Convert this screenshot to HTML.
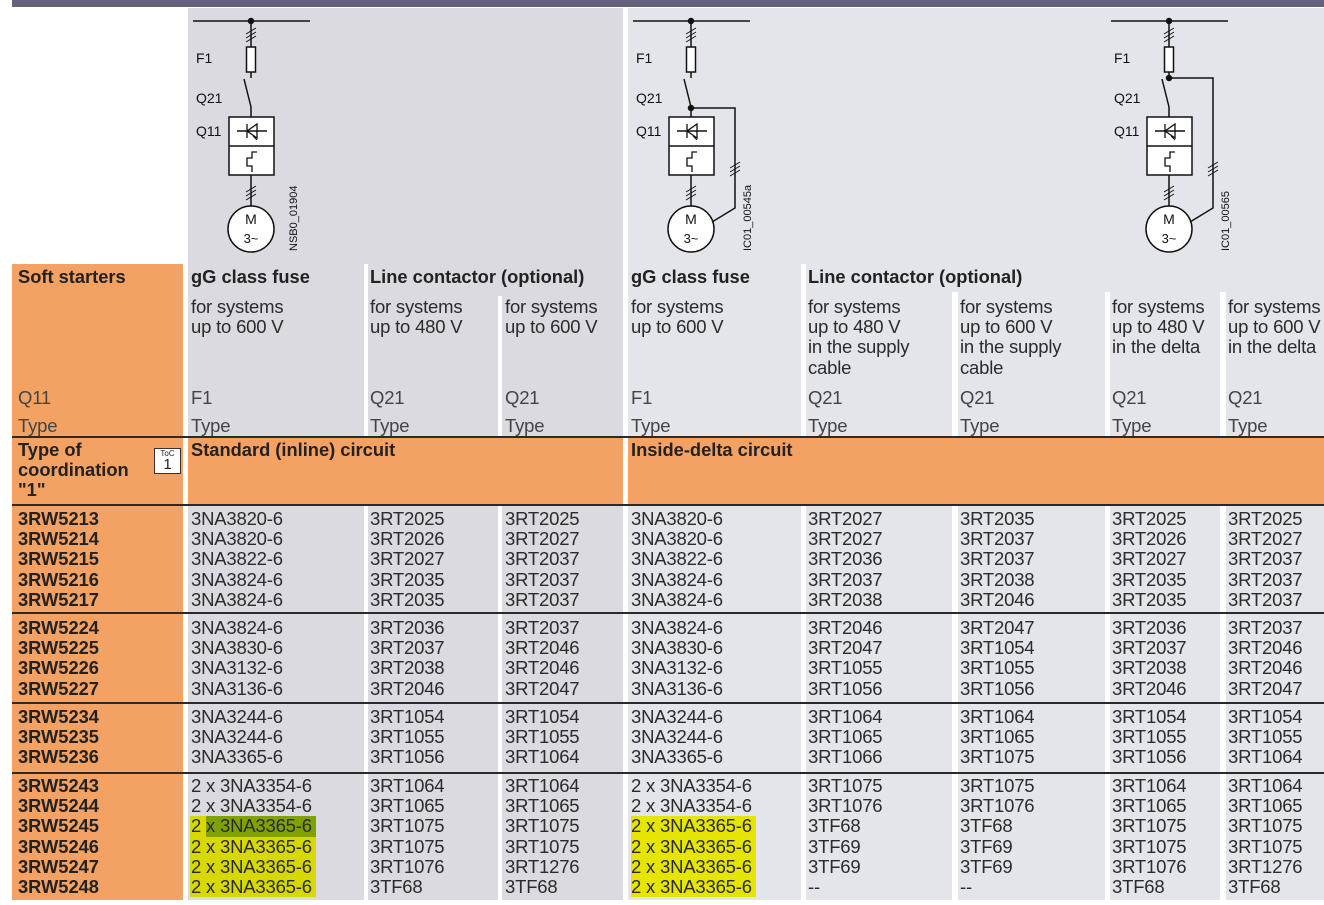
<!DOCTYPE html>
<html><head><meta charset="utf-8">
<style>
*{margin:0;padding:0;box-sizing:border-box}
body{width:1324px;height:905px;position:relative;background:#fff;font-family:"Liberation Sans",Arial,sans-serif;color:#2b2b2b;overflow:hidden}
.a{position:absolute}
.t{position:absolute;font-size:18.5px;line-height:20.2px;white-space:nowrap;letter-spacing:-0.2px}
.b{font-weight:bold;font-size:18.3px;letter-spacing:0px;color:#222}
.o{background:#f4a263}
.g1{background:#dadae0}
.g2{background:#e4e5ea}
.w{background:#fff}
.k{background:#2a2a2a;height:1.5px}
.hl{background:#d6d800}
.hl2{background:#e6e500}
.dg{background:#80a200}
</style></head><body>
<div class="a" style="left:12px;top:0;width:1312px;height:7px;background:#64637b"></div>
<div class="a g1" style="left:188px;top:8px;width:435px;height:429px"></div>
<div class="a g2" style="left:628px;top:8px;width:696px;height:429px"></div>
<div class="a o" style="left:12px;top:264px;width:171px;height:173px"></div>
<div class="a w" style="left:364px;top:264px;width:4px;height:173px"></div>
<div class="a w" style="left:498px;top:296px;width:4px;height:141px"></div>
<div class="a w" style="left:801px;top:264px;width:5px;height:173px"></div>
<div class="a w" style="left:952px;top:292px;width:6px;height:145px"></div>
<div class="a w" style="left:1105px;top:292px;width:5px;height:145px"></div>
<div class="a w" style="left:1220px;top:292px;width:6px;height:145px"></div>
<div class="a o" style="left:12px;top:437px;width:171px;height:68px"></div>
<div class="a o" style="left:188px;top:437px;width:435px;height:68px"></div>
<div class="a o" style="left:628px;top:437px;width:696px;height:68px"></div>
<div class="a o" style="left:12px;top:505px;width:171px;height:395px"></div>
<div class="a g1" style="left:188px;top:505px;width:176px;height:395px"></div>
<div class="a g1" style="left:368px;top:505px;width:130px;height:395px"></div>
<div class="a g1" style="left:502px;top:505px;width:121px;height:395px"></div>
<div class="a g2" style="left:628px;top:505px;width:173px;height:395px"></div>
<div class="a g2" style="left:806px;top:505px;width:146px;height:395px"></div>
<div class="a g2" style="left:958px;top:505px;width:147px;height:395px"></div>
<div class="a g2" style="left:1110px;top:505px;width:110px;height:395px"></div>
<div class="a g2" style="left:1226px;top:505px;width:98px;height:395px"></div>
<div class="a k" style="left:12px;top:436px;width:1312px"></div>
<div class="a k" style="left:12px;top:504px;width:1312px"></div>
<div class="a k" style="left:12px;top:612px;width:1312px"></div>
<div class="a k" style="left:12px;top:702px;width:1312px"></div>
<div class="a k" style="left:12px;top:772px;width:1312px"></div>
<div class="a hl" style="left:190px;top:816px;width:126px;height:81px"></div>
<div class="a dg" style="left:206px;top:816px;width:110px;height:21px"></div>
<div class="a hl2" style="left:631px;top:816px;width:125px;height:81px"></div>

<svg class="a" style="left:0;top:0" width="1324" height="264" viewBox="0 0 1324 264" fill="none" stroke="#111" stroke-width="1.5" font-family="Liberation Sans,Arial,sans-serif">
<defs>
<g id="d">
<line x1="-58" y1="21" x2="59" y2="21"/>
<circle cx="0" cy="21" r="2.5" fill="#111"/>
<line x1="0" y1="21" x2="0" y2="47"/>
<path d="M-5 34 L5 28 M-5 38 L5 32 M-5 42 L5 36" stroke-width="1"/>
<rect x="-4.5" y="47" width="9" height="25" fill="#fff"/>
<line x1="0" y1="72" x2="0" y2="78"/>
<line x1="-7" y1="79" x2="0" y2="107"/>
<line x1="0" y1="107" x2="0" y2="117"/>
<rect x="-22" y="117" width="45" height="58" fill="#fff"/>
<line x1="-22" y1="146" x2="23" y2="146"/>
<line x1="-14" y1="131" x2="16" y2="131"/>
<path d="M-4 124 L-4 138 M6 124 L6 138 L-4 131 Z M6 124 L-4 131" stroke-width="1.3"/>
<path d="M2 136 L6 140" stroke-width="1"/>
<path d="M6 152 L1 152 L1 158 L-4 158 L-4 166 L1 166 L1 172" stroke-width="1.3"/>
<line x1="0" y1="175" x2="0" y2="206"/>
<path d="M-5 192 L5 186 M-5 196 L5 190 M-5 200 L5 194" stroke-width="1"/>
<circle cx="0" cy="229" r="23" fill="#fff"/>
</g>
</defs>
<use href="#d" x="251"/>
<use href="#d" x="691"/>
<use href="#d" x="1169"/>
<circle cx="691" cy="108" r="2.5" fill="#111"/>
<path d="M691 108 L735 108 L735 208 L712 222"/>
<path d="M730 168 L740 162 M730 172 L740 166 M730 176 L740 170" stroke-width="1"/>
<circle cx="1169" cy="78" r="2.5" fill="#111"/>
<path d="M1169 78 L1213 78 L1213 208 L1190 222"/>
<path d="M1208 168 L1218 162 M1208 172 L1218 166 M1208 176 L1218 170" stroke-width="1"/>
<g fill="#111" stroke="none" font-size="14">
<text x="196" y="63">F1</text><text x="196" y="103">Q21</text><text x="196" y="136">Q11</text>
<text x="636" y="63">F1</text><text x="636" y="103">Q21</text><text x="636" y="136">Q11</text>
<text x="1114" y="63">F1</text><text x="1114" y="103">Q21</text><text x="1114" y="136">Q11</text>
<text x="251" y="224" text-anchor="middle" font-size="14">M</text><text x="251" y="243" text-anchor="middle" font-size="13">3~</text>
<text x="691" y="224" text-anchor="middle" font-size="14">M</text><text x="691" y="243" text-anchor="middle" font-size="13">3~</text>
<text x="1169" y="224" text-anchor="middle" font-size="14">M</text><text x="1169" y="243" text-anchor="middle" font-size="13">3~</text>
<text font-size="11" transform="translate(297 251) rotate(-90)">NSB0_01904</text>
<text font-size="11" transform="translate(751 251) rotate(-90)">IC01_00545a</text>
<text font-size="11" transform="translate(1229 251) rotate(-90)">IC01_00565</text>
</g>
</svg>

<div class="t b" style="left:18px;top:267px">Soft starters</div>
<div class="t b" style="left:191px;top:267px">gG class fuse</div>
<div class="t b" style="left:370px;top:267px">Line contactor (optional)</div>
<div class="t b" style="left:631px;top:267px">gG class fuse</div>
<div class="t b" style="left:808px;top:267px">Line contactor (optional)</div>
<div class="t" style="left:191px;top:297px">for systems<br>up to 600 V</div>
<div class="t" style="left:370px;top:297px">for systems<br>up to 480 V</div>
<div class="t" style="left:505px;top:297px">for systems<br>up to 600 V</div>
<div class="t" style="left:631px;top:297px">for systems<br>up to 600 V</div>
<div class="t" style="left:808px;top:297px">for systems<br>up to 480 V<br>in the supply<br>cable</div>
<div class="t" style="left:960px;top:297px">for systems<br>up to 600 V<br>in the supply<br>cable</div>
<div class="t" style="left:1112px;top:297px">for systems<br>up to 480 V<br>in the delta</div>
<div class="t" style="left:1228px;top:297px">for systems<br>up to 600 V<br>in the delta</div>
<div class="t" style="left:18px;top:384px;line-height:28px;color:#444">Q11<br>Type</div>
<div class="t" style="left:191px;top:384px;line-height:28px;color:#444">F1<br>Type</div>
<div class="t" style="left:370px;top:384px;line-height:28px;color:#444">Q21<br>Type</div>
<div class="t" style="left:505px;top:384px;line-height:28px;color:#444">Q21<br>Type</div>
<div class="t" style="left:631px;top:384px;line-height:28px;color:#444">F1<br>Type</div>
<div class="t" style="left:808px;top:384px;line-height:28px;color:#444">Q21<br>Type</div>
<div class="t" style="left:960px;top:384px;line-height:28px;color:#444">Q21<br>Type</div>
<div class="t" style="left:1112px;top:384px;line-height:28px;color:#444">Q21<br>Type</div>
<div class="t" style="left:1228px;top:384px;line-height:28px;color:#444">Q21<br>Type</div>

<div class="t b" style="left:18px;top:440px">Type of<br>coordination<br>"1"</div>
<div class="a" style="left:154px;top:448px;width:27px;height:26px;border:1.5px solid #333;background:#fff;text-align:center;font-size:8px;line-height:9px;color:#222">ToC<br><span style="font-size:15px;line-height:13px">1</span></div>
<div class="t b" style="left:191px;top:440px">Standard (inline) circuit</div>
<div class="t b" style="left:631px;top:440px">Inside-delta circuit</div>

<div class="t b" style="left:18px;top:509px">3RW5213<br>3RW5214<br>3RW5215<br>3RW5216<br>3RW5217</div>
<div class="t b" style="left:18px;top:618px">3RW5224<br>3RW5225<br>3RW5226<br>3RW5227</div>
<div class="t b" style="left:18px;top:707px">3RW5234<br>3RW5235<br>3RW5236</div>
<div class="t b" style="left:18px;top:776px">3RW5243<br>3RW5244<br>3RW5245<br>3RW5246<br>3RW5247<br>3RW5248</div>

<div class="t" style="left:191px;top:509px">3NA3820-6<br>3NA3820-6<br>3NA3822-6<br>3NA3824-6<br>3NA3824-6</div>
<div class="t" style="left:191px;top:618px">3NA3824-6<br>3NA3830-6<br>3NA3132-6<br>3NA3136-6</div>
<div class="t" style="left:191px;top:707px">3NA3244-6<br>3NA3244-6<br>3NA3365-6</div>
<div class="t" style="left:191px;top:776px">2 x 3NA3354-6<br>2 x 3NA3354-6<br>2 x 3NA3365-6<br>2 x 3NA3365-6<br>2 x 3NA3365-6<br>2 x 3NA3365-6</div>

<div class="t" style="left:370px;top:509px">3RT2025<br>3RT2026<br>3RT2027<br>3RT2035<br>3RT2035</div>
<div class="t" style="left:370px;top:618px">3RT2036<br>3RT2037<br>3RT2038<br>3RT2046</div>
<div class="t" style="left:370px;top:707px">3RT1054<br>3RT1055<br>3RT1056</div>
<div class="t" style="left:370px;top:776px">3RT1064<br>3RT1065<br>3RT1075<br>3RT1075<br>3RT1076<br>3TF68</div>

<div class="t" style="left:505px;top:509px">3RT2025<br>3RT2027<br>3RT2037<br>3RT2037<br>3RT2037</div>
<div class="t" style="left:505px;top:618px">3RT2037<br>3RT2046<br>3RT2046<br>3RT2047</div>
<div class="t" style="left:505px;top:707px">3RT1054<br>3RT1055<br>3RT1064</div>
<div class="t" style="left:505px;top:776px">3RT1064<br>3RT1065<br>3RT1075<br>3RT1075<br>3RT1276<br>3TF68</div>

<div class="t" style="left:631px;top:509px">3NA3820-6<br>3NA3820-6<br>3NA3822-6<br>3NA3824-6<br>3NA3824-6</div>
<div class="t" style="left:631px;top:618px">3NA3824-6<br>3NA3830-6<br>3NA3132-6<br>3NA3136-6</div>
<div class="t" style="left:631px;top:707px">3NA3244-6<br>3NA3244-6<br>3NA3365-6</div>
<div class="t" style="left:631px;top:776px">2 x 3NA3354-6<br>2 x 3NA3354-6<br>2 x 3NA3365-6<br>2 x 3NA3365-6<br>2 x 3NA3365-6<br>2 x 3NA3365-6</div>

<div class="t" style="left:808px;top:509px">3RT2027<br>3RT2027<br>3RT2036<br>3RT2037<br>3RT2038</div>
<div class="t" style="left:808px;top:618px">3RT2046<br>3RT2047<br>3RT1055<br>3RT1056</div>
<div class="t" style="left:808px;top:707px">3RT1064<br>3RT1065<br>3RT1066</div>
<div class="t" style="left:808px;top:776px">3RT1075<br>3RT1076<br>3TF68<br>3TF69<br>3TF69<br>--</div>

<div class="t" style="left:960px;top:509px">3RT2035<br>3RT2037<br>3RT2037<br>3RT2038<br>3RT2046</div>
<div class="t" style="left:960px;top:618px">3RT2047<br>3RT1054<br>3RT1055<br>3RT1056</div>
<div class="t" style="left:960px;top:707px">3RT1064<br>3RT1065<br>3RT1075</div>
<div class="t" style="left:960px;top:776px">3RT1075<br>3RT1076<br>3TF68<br>3TF69<br>3TF69<br>--</div>

<div class="t" style="left:1112px;top:509px">3RT2025<br>3RT2026<br>3RT2027<br>3RT2035<br>3RT2035</div>
<div class="t" style="left:1112px;top:618px">3RT2036<br>3RT2037<br>3RT2038<br>3RT2046</div>
<div class="t" style="left:1112px;top:707px">3RT1054<br>3RT1055<br>3RT1056</div>
<div class="t" style="left:1112px;top:776px">3RT1064<br>3RT1065<br>3RT1075<br>3RT1075<br>3RT1076<br>3TF68</div>

<div class="t" style="left:1228px;top:509px">3RT2025<br>3RT2027<br>3RT2037<br>3RT2037<br>3RT2037</div>
<div class="t" style="left:1228px;top:618px">3RT2037<br>3RT2046<br>3RT2046<br>3RT2047</div>
<div class="t" style="left:1228px;top:707px">3RT1054<br>3RT1055<br>3RT1064</div>
<div class="t" style="left:1228px;top:776px">3RT1064<br>3RT1065<br>3RT1075<br>3RT1075<br>3RT1276<br>3TF68</div>
</body></html>
